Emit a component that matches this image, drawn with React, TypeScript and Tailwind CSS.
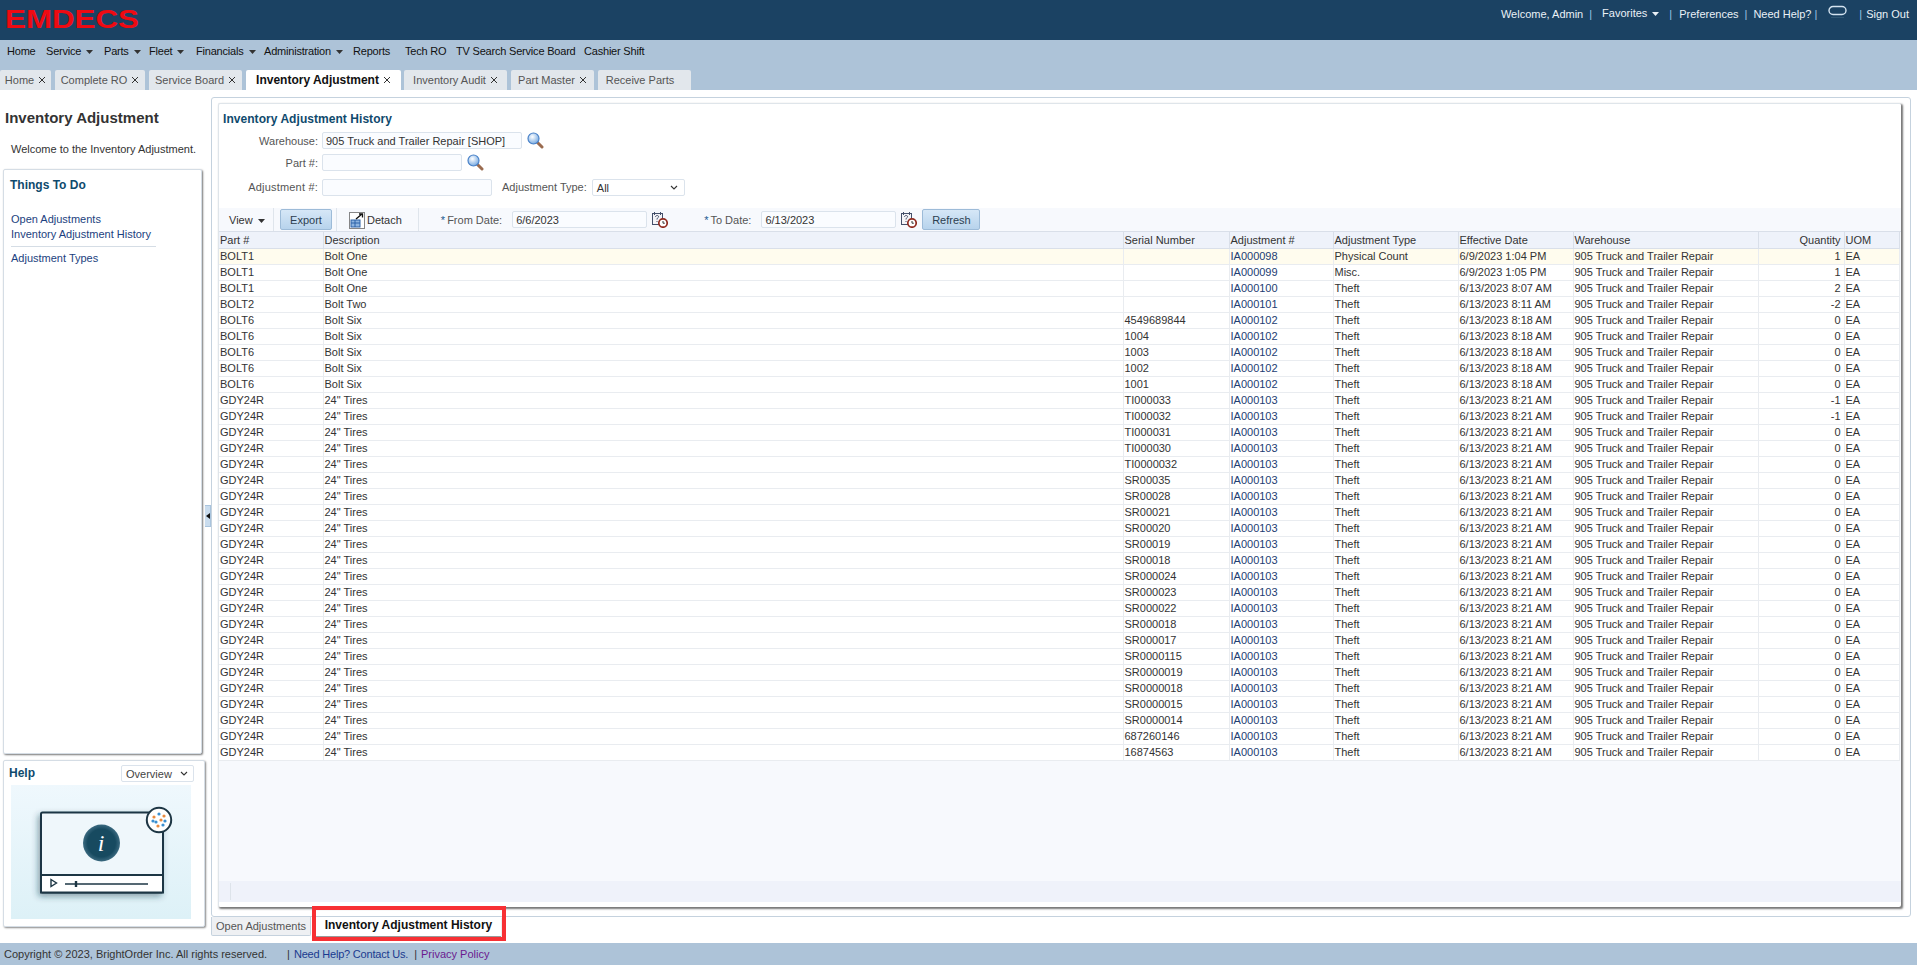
import React from "react";

const Caret = ({ c = "#333" }: { c?: string }) => (
  <svg width="7" height="4" viewBox="0 0 7 4" className="inline-block ml-[5px] align-middle"><path d="M0 0h7L3.5 4z" fill={c} /></svg>
);
const X = () => (
  <svg width="8" height="8" viewBox="0 0 8 8" className="mt-[3px]"><path d="M1 1l6 6M7 1L1 7" stroke="#333" strokeWidth="1" fill="none" /></svg>
);
const Mag = () => (
  <svg width="17" height="17" viewBox="0 0 17 17">
    <defs><radialGradient id="mg" cx="0.4" cy="0.35" r="0.7"><stop offset="0" stopColor="#ffffff" /><stop offset="1" stopColor="#6fa5e0" /></radialGradient></defs>
    <path d="M10 10l5 5" stroke="#9a6b4f" strokeWidth="3" strokeLinecap="round" />
    <circle cx="6.5" cy="6.5" r="5.5" fill="url(#mg)" stroke="#4a82c8" strokeWidth="1.2" />
  </svg>
);
const Cal = () => (
  <svg width="17" height="17" viewBox="0 0 17 17">
    <rect x="1.5" y="2.5" width="10" height="11" fill="#f4f4f8" stroke="#44506a" />
    <path d="M3.5 1v3M9.5 1v3" stroke="#44506a" />
    <path d="M4.5 6c0-2 3.5-2 3 0-.3 1-1.5 1-1.5 2.5M6 10v1" stroke="#44506a" fill="none" />
    <circle cx="12" cy="12" r="4.2" fill="#fff" stroke="#8f2b20" strokeWidth="1.7" />
    <path d="M12 10v2.2h1.8" stroke="#333" fill="none" />
  </svg>
);
const Detach = () => (
  <svg width="16" height="18" viewBox="0 0 16 18">
    <rect x="0.5" y="1.5" width="15" height="16" fill="#fff" stroke="#111" strokeDasharray="1 1" />
    <rect x="2" y="9" width="9" height="7" fill="#8db4e0" stroke="#2c62a8" />
    <path d="M2 12h9M6 9v7" stroke="#2c62a8" />
    <path d="M7 8l6-5M10 3h3.5v3.5" stroke="#111" strokeWidth="1.3" fill="none" />
  </svg>
);

const navItems = [
  { t: "Home", c: "w-[39px]" },
  { t: "Service", c: "w-[58px]", d: 1 },
  { t: "Parts", c: "w-[45px]", d: 1 },
  { t: "Fleet", c: "w-[47px]", d: 1 },
  { t: "Financials", c: "w-[68px]", d: 1 },
  { t: "Administration", c: "w-[89px]", d: 1 },
  { t: "Reports", c: "w-[52px]" },
  { t: "Tech RO", c: "w-[51px]" },
  { t: "TV Search Service Board", c: "w-[128px]" },
  { t: "Cashier Shift", c: "w-[90px]" },
];

const tabs = [
  { t: "Home", c: "w-[51px]" },
  { t: "Complete RO", c: "w-[90px] ml-[4px]" },
  { t: "Service Board", c: "w-[93px] ml-[4px]" },
  { t: "Inventory Adjustment", c: "w-[155px] ml-[4px]", a: 1 },
  { t: "Inventory Audit", c: "w-[103px] ml-[3px]" },
  { t: "Part Master", c: "w-[83px] ml-[4px]" },
  { t: "Receive Parts", c: "w-[93px] ml-[4px] pr-[9px]", n: 1 },
];

type R = [string, string, string, string, string, string, number];
const bolt: R[] = [
  ["BOLT1", "Bolt One", "", "IA000098", "Physical Count", "6/9/2023 1:04 PM", 1],
  ["BOLT1", "Bolt One", "", "IA000099", "Misc.", "6/9/2023 1:05 PM", 1],
  ["BOLT1", "Bolt One", "", "IA000100", "Theft", "6/13/2023 8:07 AM", 2],
  ["BOLT2", "Bolt Two", "", "IA000101", "Theft", "6/13/2023 8:11 AM", -2],
  ...["4549689844", "1004", "1003", "1002", "1001"].map(
    (s): R => ["BOLT6", "Bolt Six", s, "IA000102", "Theft", "6/13/2023 8:18 AM", 0]
  ),
];
const qty: Record<string, number> = { TI000033: -1, TI000032: -1 };
const gdy: R[] = [
  "TI000033", "TI000032", "TI000031", "TI000030", "TI0000032", "SR00035", "SR00028", "SR00021", "SR00020", "SR00019", "SR00018",
  "SR000024", "SR000023", "SR000022", "SR000018", "SR000017", "SR0000115", "SR0000019", "SR0000018", "SR0000015", "SR0000014", "687260146", "16874563",
].map((s): R => ["GDY24R", '24" Tires', s, "IA000103", "Theft", "6/13/2023 8:21 AM", qty[s] ?? 0]);
const rows = [...bolt, ...gdy];

const inputCls = "h-[17px] border border-[#dbe3ec] rounded-[2px] bg-[#fafcff] px-[3px] text-[11px] leading-[15px] text-[#333]";
const cellCls = "h-[16px] p-0 pl-[1px] border-b border-r border-[#e9ecf0] whitespace-nowrap overflow-hidden font-normal text-left";
const headCls = "h-[16px] p-0 pl-[1px] border-b border-r border-[#d9dfe9] whitespace-nowrap font-normal text-left text-[#333]";

export default function App() {
  return (
    <div className="relative w-[1917px] h-[965px] overflow-hidden flex flex-col bg-white text-[11px] leading-[14px] text-[#333] font-['Liberation_Sans',Arial,sans-serif]">
      {/* header */}
      <div className="h-[40px] shrink-0 bg-[#1b4263] flex justify-between text-[#eaf1f7]">
        <svg width="140" height="40" viewBox="0 0 140 40">
          <text x="5" y="28" fontFamily="Liberation Sans, sans-serif" fontWeight="700" fontSize="26" textLength="134" lengthAdjust="spacingAndGlyphs" fill="#ee0a12">EMDECS</text>
        </svg>
        <div className="flex pt-[7px] pr-[8px] h-[21px] items-start text-[11px] leading-[14px]">
          <span>Welcome, Admin</span>
          <span className="ml-[6px] text-[#9cc4e4]">|</span>
          <span className="ml-[10px] -mt-[1px]">Favorites<Caret c="#eaf1f7" /></span>
          <span className="ml-[10px] text-[#9cc4e4]">|</span>
          <span className="ml-[7px]">Preferences</span>
          <span className="ml-[6px] text-[#9cc4e4]">|</span>
          <span className="ml-[6px]">Need Help?</span>
          <span className="ml-[3px] text-[#9cc4e4]">|</span>
          <svg width="22" height="14" viewBox="0 0 22 14" className="ml-[10px] -mt-[2px]">
            <rect x="2" y="1.5" width="17" height="8" rx="4" fill="none" stroke="#d4e3f0" strokeWidth="1.4" />
            <path d="M4 12.5h13" stroke="#2f5674" strokeWidth="1" />
          </svg>
          <span className="ml-[10px] text-[#9cc4e4]">|</span>
          <span className="ml-[4px]">Sign Out</span>
        </div>
      </div>

      {/* nav */}
      <div className="h-[30px] shrink-0 bg-[#adc3d8] flex items-start pt-[4px] pl-[7px] text-[#111] tracking-[-0.2px]">
        {navItems.map((n) => (
          <span key={n.t} className={`${n.c} shrink-0 whitespace-nowrap`}>{n.t}{n.d ? <Caret /> : null}</span>
        ))}
      </div>

      {/* tabs */}
      <div className="h-[20px] shrink-0 bg-[#adc3d8] flex items-stretch">
        {tabs.map((t) => (
          <div key={t.t} className={`${t.c} flex justify-center gap-[4px] rounded-t-[2px] whitespace-nowrap ${t.a ? "bg-white font-bold text-[12px] text-[#111] pt-[3px]" : "bg-[#e2e7ec] text-[#555] pt-[3px]"}`}>
            <span>{t.t}</span>
            {t.n ? null : <X />}
          </div>
        ))}
      </div>

      {/* main */}
      <div className="flex-1 min-h-0 flex">
        {/* left */}
        <div className="w-[205px] shrink-0 flex flex-col">
          <div className="h-[79px] pl-[5px] pt-[19px]">
            <div className="text-[15px] leading-[17px] font-bold text-[#333]">Inventory Adjustment</div>
            <div className="mt-[16px] ml-[6px] leading-[14px]">Welcome to the Inventory Adjustment.</div>
          </div>
          <div className="ml-[3px] w-[199px] h-[585px] bg-white border border-[#d5dde5] rounded-[2px] shadow-[1px_1px_2px_#777] pl-[6px] pt-[8px]">
            <div className="font-bold text-[12px] text-[#0f4a6d] leading-[14px]">Things To Do</div>
            <div className="mt-[20px] text-[#1c3f80] w-[146px] pl-[1px]">
              <div className="leading-[15px]">Open Adjustments</div>
              <div className="leading-[15px] pb-[4px] border-b border-[#d5dde5]">Inventory Adjustment History</div>
              <div className="leading-[15px] mt-[4px]">Adjustment Types</div>
            </div>
          </div>
          <div className="mt-[6px] ml-[3px] w-[202px] h-[167px] bg-white border border-[#d5dde5] rounded-[2px] shadow-[1px_1px_2px_#888] flex flex-col">
            <div className="h-[24px] shrink-0 flex justify-between pl-[5px] pr-[10px] pt-[4px]">
              <span className="font-bold text-[#0f4a6d] mt-[1px] text-[12px]">Help</span>
              <div className="w-[73px] h-[17px] border border-[#dbe3ec] rounded-[2px] flex items-center justify-between pl-[4px] pr-[5px] text-[#444]">
                <span>Overview</span>
                <svg width="8" height="5" viewBox="0 0 8 5"><path d="M1 1l3 3 3-3" stroke="#333" strokeWidth="1.1" fill="none" /></svg>
              </div>
            </div>
            <div className="ml-[7px] w-[180px] h-[134px] bg-gradient-to-b from-[#eff8fd] to-[#ddf1f7] flex items-start">
              <svg width="180" height="134" viewBox="0 0 180 134">
                <defs>
                  <radialGradient id="ic"><stop offset="0.75" stopColor="#174a60" /><stop offset="1" stopColor="#3b6a80" /></radialGradient>
                  <filter id="sh" x="-20%" y="-20%" width="140%" height="140%"><feDropShadow dx="-2" dy="3" stdDeviation="3" floodColor="#1b3a4a" floodOpacity="0.45" /></filter>
                </defs>
                <rect x="30" y="27.5" width="122" height="80" rx="1.5" fill="#eff7fb" stroke="#1d3644" strokeWidth="2" filter="url(#sh)" />
                <rect x="30" y="90" width="122" height="17.5" fill="#fff" stroke="#1d3644" strokeWidth="2" />
                <circle cx="90.5" cy="58" r="18.5" fill="url(#ic)" />
                <text x="90" y="66" textAnchor="middle" fontFamily="Liberation Serif, serif" fontStyle="italic" fontSize="24" fill="#fff">i</text>
                <path d="M40 94.5l5.5 3.5-5.5 3.5z" fill="#fff" stroke="#1d3644" strokeWidth="1.4" />
                <path d="M54 99h83" stroke="#1d3644" strokeWidth="1.6" />
                <path d="M65 96v6" stroke="#1d3644" strokeWidth="2.4" />
                <circle cx="148" cy="35" r="12.2" fill="#fff" stroke="#1d3644" strokeWidth="2" />
                {[[143, 32, "#e98a3e"], [148, 29, "#3a8fd0"], [153, 31, "#e98a3e"], [145, 37, "#3a8fd0"], [150, 35, "#e98a3e"], [154, 36, "#3a8fd0"], [147, 41, "#e98a3e"], [152, 40, "#3a8fd0"], [142, 36, "#3a8fd0"]].map((d, i) => (
                  <circle key={i} cx={d[0] as number} cy={d[1] as number} r="1.6" fill={d[2] as string} />
                ))}
              </svg>
            </div>
          </div>
        </div>

        {/* splitter */}
        <div className="w-[6px] shrink-0 flex flex-col pt-[415px]">
          <div className="w-[6px] h-[22px] bg-[#c9dcee] border-y border-r border-[#a9c4dd] flex items-center justify-center">
            <svg width="4" height="6" viewBox="0 0 4 6"><path d="M4 0v6L0 3z" fill="#111" /></svg>
          </div>
        </div>

        {/* right */}
        <div className="flex-1 min-w-0 flex flex-col pt-[7px]">
          <div className="ml-0 w-[1700px] h-[820px] border border-[#c5d2de] rounded-[3px] pl-[6px] pt-[5px]">
            <div className="w-[1683px] h-[804px] bg-white rounded-[2px] border-t border-l border-[#dfe5ea] shadow-[1.5px_1.5px_2px_#777] flex flex-col">
              <div className="h-[104px] shrink-0 pt-[8px]">
                <div className="ml-[4px] h-[16px] font-bold text-[12px] leading-[14px] text-[#0f4a6d] tracking-[0.05px]">Inventory Adjustment History</div>
                <div className="mt-[4px] flex items-center h-[17px]">
                  <span className="w-[99px] text-right text-[#555]">Warehouse:</span>
                  <input readOnly value="905 Truck and Trailer Repair [SHOP]" className={`${inputCls} ml-[4px] w-[200px]`} />
                  <span className="ml-[5px] mt-[-1px]"><Mag /></span>
                </div>
                <div className="mt-[5px] flex items-center h-[17px]">
                  <span className="w-[99px] text-right text-[#555]">Part #:</span>
                  <input readOnly className={`${inputCls} ml-[4px] w-[140px]`} />
                  <span className="ml-[5px] mt-[-1px]"><Mag /></span>
                </div>
                <div className="mt-[7px] flex items-center h-[18px]">
                  <span className="w-[99px] text-right text-[#555] tracking-[0.2px]">Adjustment #:</span>
                  <input readOnly className={`${inputCls} ml-[4px] w-[170px]`} />
                  <span className="ml-[10px] text-[#555]">Adjustment Type:</span>
                  <div className="ml-[5px] w-[93px] h-[17px] mt-[1px] border border-[#dbe3ec] rounded-[2px] flex items-center justify-between pl-[4px] pr-[6px]">
                    <span>All</span>
                    <svg width="8" height="5" viewBox="0 0 8 5"><path d="M1 1l3 3 3-3" stroke="#333" strokeWidth="1.1" fill="none" /></svg>
                  </div>
                </div>
              </div>

              <div className="h-[24px] shrink-0 bg-[#f7f9fd] border-b border-[#d9dfe9] flex items-center text-[#333]">
                <span className="ml-[10px] w-[44px]">View<Caret /></span>
                <span className="w-px h-[23px] bg-[#dfe5ec]" />
                <button className="ml-[6px] w-[52px] h-[21px] rounded-[2px] border border-[#9dbbd8] bg-gradient-to-b from-[#d6e7f7] to-[#b7d3ec] text-[11px] text-[#2c3e50]">Export</button>
                <span className="ml-[4px] w-px h-[23px] bg-[#dfe5ec]" />
                <span className="ml-[12px]"><Detach /></span>
                <span className="ml-[2px]">Detach</span>
                <span className="ml-[16px] w-px h-[23px] bg-[#dfe5ec]" />
                <span className="ml-[22px] text-[#1b5a8f]">*</span>
                <span className="ml-[2px] text-[#555] w-[65px]">From Date:</span>
                <input readOnly value="6/6/2023" className={`${inputCls} w-[135px]`} />
                <span className="ml-[4px]"><Cal /></span>
                <span className="ml-[36px] text-[#1b5a8f]">*</span>
                <span className="ml-[2px] text-[#555] w-[51px]">To Date:</span>
                <input readOnly value="6/13/2023" className={`${inputCls} w-[135px]`} />
                <span className="ml-[4px]"><Cal /></span>
                <button className="ml-[5px] w-[58px] h-[21px] rounded-[2px] border border-[#9dbbd8] bg-gradient-to-b from-[#d6e7f7] to-[#b7d3ec] text-[11px] text-[#2c3e50]">Refresh</button>
              </div>

              <div className="flex-1 min-h-0 bg-[#f7f9fd]">
                <table className="table-fixed border-collapse w-[1680px] text-[11px] leading-[14px]">
                  <colgroup>
                    <col className="w-[104px]" /><col className="w-[800px]" /><col className="w-[106px]" /><col className="w-[104px]" />
                    <col className="w-[125px]" /><col className="w-[115px]" /><col className="w-[185px]" /><col className="w-[86px]" /><col className="w-[55px]" />
                  </colgroup>
                  <thead className="bg-[#eef2fa]">
                    <tr>
                      <th className={headCls}>Part #</th>
                      <th className={headCls}>Description</th>
                      <th className={headCls}>Serial Number</th>
                      <th className={headCls}>Adjustment #</th>
                      <th className={headCls}>Adjustment Type</th>
                      <th className={headCls}>Effective Date</th>
                      <th className={headCls}>Warehouse</th>
                      <th className={`${headCls} !text-right pr-[3px]`}>Quantity</th>
                      <th className={headCls}>UOM</th>
                    </tr>
                  </thead>
                  <tbody>
                    {rows.map((r, i) => (
                      <tr key={i} className={i === 0 ? "bg-[#fffcee]" : "bg-white"}>
                        <td className={cellCls}>{r[0]}</td>
                        <td className={cellCls}>{r[1]}</td>
                        <td className={cellCls}>{r[2]}</td>
                        <td className={`${cellCls} text-[#233d72]`}>{r[3]}</td>
                        <td className={cellCls}>{r[4]}</td>
                        <td className={cellCls}>{r[5]}</td>
                        <td className={cellCls}>905 Truck and Trailer Repair</td>
                        <td className={`${cellCls} !text-right pr-[3px]`}>{r[6]}</td>
                        <td className={cellCls}>EA</td>
                      </tr>
                    ))}
                  </tbody>
                </table>
              </div>

              <div className="h-[21px] shrink-0 bg-[#eff2fa] mb-[5px] flex items-center">
                <span className="ml-[11px] w-px h-[17px] bg-[#dde3ea]" />
              </div>
            </div>
          </div>

          <div className="h-[19px] flex items-start">
            <div className="w-[100px] h-[19px] bg-[#eef0f3] border border-t-0 border-[#c5d2de] rounded-b-[2px] text-center pt-[2px] text-[#555]">Open Adjustments</div>
            <div className="ml-[5px] w-[185px] h-[19px] bg-white font-bold text-[12px] text-[#111] text-center pt-[1px] shadow-[0_1px_1px_#999]">Inventory Adjustment History</div>
          </div>
        </div>
      </div>

      {/* footer */}
      <div className="h-[22px] shrink-0 bg-[#adc3d8] flex items-center pl-[4px] text-[#333]">
        <span>Copyright © 2023, BrightOrder Inc. All rights reserved.</span>
        <span className="ml-[20px]">|</span>
        <span className="ml-[4px] text-[#1a3a8f] tracking-[-0.2px]">Need Help? Contact Us.</span>
        <span className="ml-[6px]">|</span>
        <span className="ml-[4px] text-[#6b1a8f]">Privacy Policy</span>
      </div>

      {/* annotation overlay */}
      <div className="absolute left-[312px] top-[906px] w-[194px] h-[35px] border-[4px] border-[#f73034] pointer-events-none" />
    </div>
  );
}
